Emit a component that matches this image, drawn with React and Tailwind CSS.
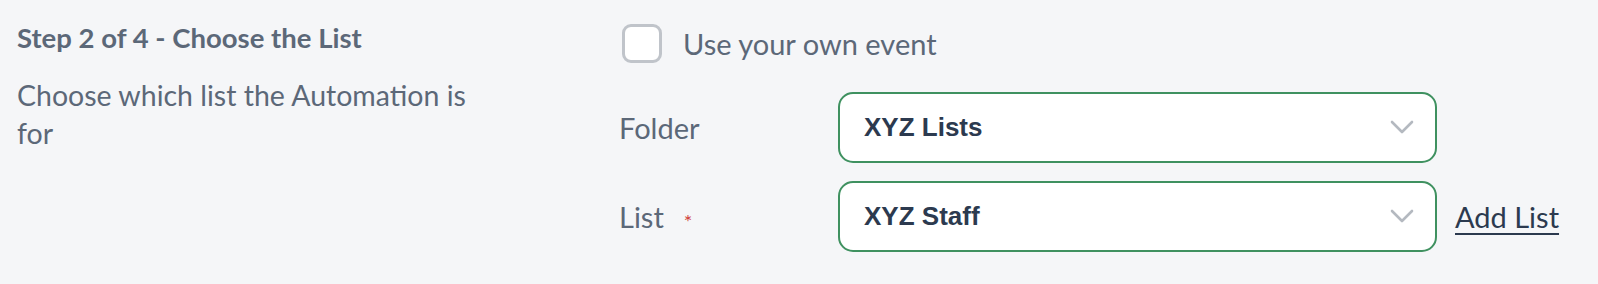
const FONT = { fontFamily: 'Lato, "Open Sans", sans-serif' }

function Chevron() {
  return (
    <svg width="24" height="15" viewBox="0 0 24 15" fill="none" className="text-[#b4b9c0]">
      <polyline points="2,2 12,12 22,2" stroke="currentColor" strokeWidth="2.6" strokeLinecap="round" strokeLinejoin="round" />
    </svg>
  )
}

function Select({ value }) {
  return (
    <div className="flex h-[71px] w-[599px] items-center justify-between rounded-[15px] border-2 border-[#3f9160] bg-white pl-[24px] pr-[21px]">
      <span className="font-['Liberation_Sans',Arial,sans-serif] text-[26px] font-bold text-[#2c3a4f]">{value}</span>
      <Chevron />
    </div>
  )
}

export default function App() {
  return (
    <div className="flex h-[284px] w-full bg-[#f5f6f8] text-[#5c6878]" style={FONT}>
      <div className="w-[602px] pl-[17px] pt-[20px]">
        <h2 className="text-[27.5px] font-bold leading-[36px]">Step 2 of 4 - Choose the List</h2>
        <p className="mt-[20px] w-[470px] text-[28.5px] leading-[38px]">
          Choose which list the Automation is for
        </p>
      </div>

      <div className="flex flex-col pt-[24px]">
        <label className="ml-[20px] flex items-center gap-[21px]">
          <span className="h-[39px] w-[40px] rounded-[9px] border-[3px] border-[#c0c4ca] bg-white"></span>
          <span className="text-[29px] leading-[36px]">Use your own event</span>
        </label>

        <div className="mt-[29px] flex flex-col gap-[18px] pl-[17px]">
          <div className="flex items-center">
            <span className="w-[219px] text-[29px]">Folder</span>
            <Select value="XYZ Lists" />
          </div>
          <div className="flex items-center">
            <span className="flex w-[219px] items-center text-[29px]">
              List
              <span className="ml-[20px] mt-[8px] text-[20px] leading-none text-[#d0413a]">*</span>
            </span>
            <Select value="XYZ Staff" />
            <a href="#" className="ml-[18px] text-[29px] text-[#2c3a4f] underline decoration-[2px] underline-offset-[5px]">
              Add List
            </a>
          </div>
        </div>
      </div>
    </div>
  )
}
